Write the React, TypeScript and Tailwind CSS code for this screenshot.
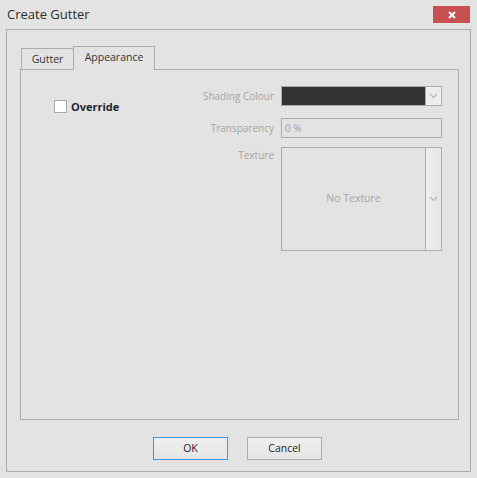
function Chevron() {
  return (
    <svg className="w-[9px] h-[6px]" viewBox="0 0 9 6" fill="none" stroke="#b4b4b4" strokeWidth={1.2}>
      <path d="M1 1l3.5 3.5L8 1" />
    </svg>
  );
}

function FieldRow({ label, children, alignTop = false }: { label: string; children: React.ReactNode; alignTop?: boolean }) {
  return (
    <div className={`flex gap-[7px] ${alignTop ? "items-start" : "items-center"}`}>
      <div className={`w-[100px] text-right text-[10px] text-[#a3a3a3] ${alignTop ? "pt-[1px]" : ""}`}>{label}</div>
      {children}
    </div>
  );
}

export default function App() {
  return (
    <div
      className="w-[477px] h-[478px] bg-[#e3e3e3] flex flex-col"
      style={{ fontFamily: '"Open Sans", "Noto Sans", sans-serif' }}
    >
      {/* title bar */}
      <div className="h-[29px] flex items-start">
        <div className="pl-[7px] pt-[5px] text-[13px] leading-[18px] text-[#2b2b2b]">Create Gutter</div>
        <button className="ml-auto mr-[7px] mt-[6px] w-[37px] h-[17px] bg-[#c75050] flex items-center justify-center">
          <svg className="w-[8px] h-[8px]" viewBox="0 0 8 8" stroke="#ffffff" strokeWidth={2}>
            <path d="M1 1l6 6M7 1L1 7" />
          </svg>
        </button>
      </div>

      {/* outer frame */}
      <div className="ml-[6px] w-[465px] h-[443px] border border-[#acacac] flex flex-col">
        <div className="pl-[13px] pr-[11px] pt-[15px]">
          {/* tabs */}
          <div className="flex items-end pl-[1px] h-[24px]">
            <div className="h-[21px] w-[52px] border-l border-t border-[#acacac] text-[10.5px] text-[#333] flex items-center justify-center pt-[1px]">
              Gutter
            </div>
            <div className="relative z-10 h-[24px] w-[82px] border-l border-t border-r border-[#acacac] bg-[#e3e3e3] text-[10.5px] text-[#333] flex items-start justify-center pt-[3px] -mb-[1px]">
              Appearance
            </div>
          </div>

          {/* panel */}
          <div className="h-[351px] border border-[#acacac] flex">
            <div className="pl-[33px] pt-[30px]">
              <label className="flex items-center gap-[4px]">
                <span className="w-[13px] h-[13px] border border-[#a8a8a8] bg-white" />
                <span className="text-[11px] font-bold text-[#1f2533] leading-[13px]">Override</span>
              </label>
            </div>

            <div className="ml-auto pr-[16px] pt-[16px] flex flex-col">
              <FieldRow label="Shading Colour">
                <div className="w-[161px] h-[20px] border border-[#acacac] flex">
                  <div className="flex-1 bg-[#333333]" />
                  <div className="w-[16px] border-l border-[#acacac] bg-[#eeeeee] flex items-center justify-center">
                    <Chevron />
                  </div>
                </div>
              </FieldRow>

              <div className="mt-[12px]">
                <FieldRow label="Transparency">
                  <div className="w-[161px] h-[20px] border border-[#acacac] text-[10px] text-[#a3a3a3] pl-[3px] flex items-center">
                    0 %
                  </div>
                </FieldRow>
              </div>

              <div className="mt-[9px]">
                <FieldRow label="Texture" alignTop>
                  <div className="w-[161px] h-[104px] border border-[#acacac] flex">
                    <div className="flex-1 flex items-center justify-center text-[10.5px] text-[#a3a3a3]">No Texture</div>
                    <div className="w-[16px] border-l border-[#acacac] bg-gradient-to-r from-[#eeeeee] to-[#e6e6e6] flex items-center justify-center">
                      <Chevron />
                    </div>
                  </div>
                </FieldRow>
              </div>
            </div>
          </div>
        </div>

        {/* buttons */}
        <div className="mt-[17px] flex gap-[19px] pl-[146px]">
          <button className="w-[75px] h-[23px] border border-[#3c94ef] bg-gradient-to-b from-[#efefef] to-[#e5e5e5] text-[10.5px] text-[#222]">
            OK
          </button>
          <button className="w-[75px] h-[23px] border border-[#acacac] bg-gradient-to-b from-[#efefef] to-[#e5e5e5] text-[10.5px] text-[#222]">
            Cancel
          </button>
        </div>
      </div>
    </div>
  );
}
